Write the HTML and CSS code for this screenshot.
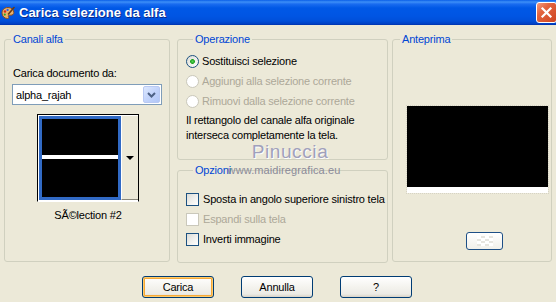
FILE: index.html
```html
<!DOCTYPE html>
<html lang="it">

<head>
    <meta charset="UTF-8">
    <title>Carica selezione da alfa</title>
    <link rel="stylesheet" href="styles.css">
</head>

<body>
    <div class="window">
        <div class="titlebar">
            <svg class="app-icon" width="14" height="14" viewBox="0 0 14 14">
                <path d="M7 1.5C3.5 1.5 1 3.8 1 7c0 3 2.4 5.5 5.5 5.5 1.4 0 1.6-.9 1-1.7-.5-.7-.2-1.6.8-1.6h1.5c1.9 0 3-1.1 3-2.8C12.8 3.6 10.3 1.5 7 1.5z" fill="#e9b36b" stroke="#8a4b1c" stroke-width="1"/>
                <circle cx="4" cy="5.5" r="1.2" fill="#d8261c"/>
                <circle cx="6.6" cy="3.9" r="1.1" fill="#2a5be0"/>
                <circle cx="3.8" cy="8.6" r="1.1" fill="#2aa32a"/>
                <path d="M13 1.5L7.5 8" stroke="#6b3b12" stroke-width="1.6" stroke-linecap="round"/>
            </svg>
            <span class="title">Carica selezione da alfa</span>
            <span class="close">
                <svg width="19" height="19" viewBox="0 0 19 19">
                    <path d="M5.5 5.5l8 8M13.5 5.5l-8 8" stroke="#fff" stroke-width="2.2" stroke-linecap="square"/>
                </svg>
            </span>
        </div>

        <div class="main">
            <fieldset class="group channels">
                <legend>Canali alfa</legend>
                <div class="label">Carica documento da:</div>
                <div class="combo">
                    <span class="combo-text">alpha_rajah</span>
                    <span class="combo-btn">
                        <svg width="9" height="6" viewBox="0 0 9 6">
                            <path d="M1 1l3.5 3.5L8 1" fill="none" stroke="#4d6185" stroke-width="2"/>
                        </svg>
                    </span>
                </div>
                <div class="thumb-col">
                    <div class="thumb">
                        <div class="thumb-img"><span class="thumb-line"></span></div>
                        <div class="thumb-btn"><span class="arrow"></span></div>
                    </div>
                    <div class="caption">SÃ©lection #2</div>
                </div>
            </fieldset>

            <div class="middle">
                <fieldset class="group operation">
                    <legend>Operazione</legend>
                    <div class="row first">
                        <span class="radio checked"></span>
                        <span>Sostituisci selezione</span>
                    </div>
                    <div class="row disabled">
                        <span class="radio"></span>
                        <span>Aggiungi alla selezione corrente</span>
                    </div>
                    <div class="row disabled">
                        <span class="radio"></span>
                        <span>Rimuovi dalla selezione corrente</span>
                    </div>
                    <p class="note">Il rettangolo del canale alfa originale<br>interseca completamente la tela.</p>
                </fieldset>

                <fieldset class="group options">
                    <legend>Opzioni</legend>
                    <div class="row first">
                        <span class="check"></span>
                        <span>Sposta in angolo superiore sinistro tela</span>
                    </div>
                    <div class="row disabled">
                        <span class="check"></span>
                        <span>Espandi sulla tela</span>
                    </div>
                    <div class="row">
                        <span class="check"></span>
                        <span>Inverti immagine</span>
                    </div>
                </fieldset>
            </div>

            <fieldset class="group preview">
                <legend>Anteprima</legend>
                <div class="preview-img"></div>
                <div class="zoom-btn"><span class="checker"></span></div>
            </fieldset>

            <!-- filigrana sopra i riquadri -->
            <div class="watermark">
                <span class="wm-name">Pinuccia</span>
                <span class="wm-site">www.maidiregrafica.eu</span>
            </div>
        </div>

        <div class="buttons">
            <button class="btn default">Carica</button>
            <button class="btn">Annulla</button>
            <button class="btn">?</button>
        </div>
    </div>
</body>

</html>
```

FILE: styles.css
```css
* {
    margin: 0;
    padding: 0;
    box-sizing: border-box;
}
body {
    background: #ece9d8;
    font: 11px "Liberation Sans", Arial, sans-serif;
    letter-spacing: -0.2px;
    color: #000;
}
.window {
    width: 556px;
    height: 302px;
    overflow: hidden;
}

/* barra del titolo */
.titlebar {
    height: 25px;
    display: flex;
    align-items: center;
    background: linear-gradient(#0a5ee8 0, #3d8ff7 2px, #1a6cf0 4px, #0058e6 8px, #0055e3 16px, #004fd9 21px, #003fc2 24px, #0030a8 25px);
}
.app-icon {
    margin-left: 1px;
    flex: none;
}
.title {
    margin-left: 4px;
    color: #fff;
    font: bold 13px "Liberation Sans", Arial, sans-serif;
    letter-spacing: 0;
    text-shadow: 1px 1px 0 #0a2a8a;
}
.close {
    margin-left: auto;
    margin-right: -1px;
    width: 21px;
    height: 21px;
    border: 1px solid #fff;
    border-radius: 3px;
    background: linear-gradient(135deg, #f39a7f 0, #e2643f 35%, #cf4521 100%);
    display: flex;
}

/* area principale */
.main {
    position: relative;
    display: flex;
    height: 238px;
    padding: 8px 0 0 4px;
}
.group {
    border: 1px solid #d0d0bf;
    border-radius: 3px;
    min-width: 0;
    height: 229px;
}
.group legend {
    margin-left: 7px;
    padding: 0 2px;
    line-height: 13px;
    color: #0046d5;
}

.channels {
    width: 166px;
    padding-left: 7px;
}
.channels legend {
    margin-left: -1px;
}
.label {
    margin: 21px 0 0 1px;
    line-height: 13px;
}
.combo {
    margin-top: 4px;
    width: 150px;
    height: 21px;
    border: 1px solid #7f9db9;
    background: #fff;
    display: flex;
    align-items: center;
    padding-left: 3px;
}
.combo-btn {
    margin-left: auto;
    margin-right: 1px;
    width: 17px;
    height: 17px;
    border: 1px solid #b9c9f3;
    border-radius: 2px;
    background: linear-gradient(135deg, #dde8fe 0, #c3d4fb 50%, #b1c6f7 100%);
    display: flex;
    align-items: center;
    justify-content: center;
}
.thumb-col {
    margin: 9px 0 0 25px;
    width: 102px;
    display: flex;
    flex-direction: column;
    align-items: center;
}
.thumb {
    width: 102px;
    height: 88px;
    display: flex;
    border: 1px solid #000;
    border-bottom-color: #fff;
    padding: 1px 0 1px 1px;
    background: #fff;
}
.thumb-img {
    width: 82px;
    height: 84px;
    border: 3px solid #316ac5;
    background: #000;
    padding-top: 36px;
}
.thumb-line {
    display: block;
    height: 4px;
    background: #fff;
}
.thumb-btn {
    flex: 1;
    margin-top: -1px;
    background: #ece9d8;
    border-left: 1px solid #fff;
    border-top: 1px solid #fff;
    border-bottom: 1px solid #8a887c;
    display: flex;
    align-items: center;
    justify-content: center;
}
.arrow {
    width: 0;
    height: 0;
    border-left: 4px solid transparent;
    border-right: 4px solid transparent;
    border-top: 4px solid #000;
}
.caption {
    margin-top: 7px;
    line-height: 13px;
}

/* colonna centrale */
.middle {
    margin-left: 7px;
    width: 211px;
}
.operation {
    height: 127px;
    padding-left: 8px;
}
.options {
    margin-top: 4px;
    height: 99px;
    padding-left: 8px;
}
.row {
    height: 20px;
    display: flex;
    align-items: center;
    gap: 3px;
    white-space: nowrap;
}
.operation .row.first {
    margin-top: 5px;
}
.options .row {
    gap: 4px;
}
.options .row.first {
    margin-top: 12px;
}
.row.disabled {
    color: #aca899;
}
.radio {
    width: 13px;
    height: 13px;
    border: 1px solid #1c5180;
    border-radius: 50%;
    background: linear-gradient(135deg, #dcdcd5 0, #f2f2ee 60%, #fff 100%);
    flex: none;
}
.radio.checked {
    background: radial-gradient(circle, #55d855 0, #21a121 2px, transparent 2.8px), linear-gradient(135deg, #dcdcd5 0, #f2f2ee 60%, #fff 100%);
}
.disabled .radio,
.disabled .check {
    border-color: #cac8bb;
    background: #fff;
}
.check {
    width: 13px;
    height: 13px;
    border: 1px solid #1c5180;
    background: linear-gradient(135deg, #dcdcd7 0, #f3f3f0 60%, #fff 100%);
    flex: none;
}
.note {
    margin-top: 2px;
    line-height: 15px;
    white-space: nowrap;
}

/* anteprima */
.preview {
    margin-left: 4px;
    width: 160px;
}
.preview-img {
    margin: 60px 0 0 14px;
    width: 141px;
    height: 87px;
    background: #000;
    border-bottom: 6px solid #fff;
    outline: 1px dotted #d6d3c4;
}
.zoom-btn {
    margin: 39px 0 0 73px;
    width: 37px;
    height: 18px;
    border: 1px solid #1d4f86;
    border-radius: 3px;
    background: linear-gradient(#fff, #f1f0ea);
    display: flex;
    align-items: center;
    justify-content: center;
}
.checker {
    width: 16px;
    height: 10px;
    background: repeating-conic-gradient(#e6e5df 0 25%, #fff 0 50%) 0 0 / 8px 5px;
}

/* filigrana */
.watermark {
    position: absolute;
    left: 226px;
    top: 115px;
    width: 116px;
    display: flex;
    flex-direction: column;
    align-items: center;
}
.wm-name {
    margin-left: 12px;
    font-size: 19px;
    line-height: 24px;
    letter-spacing: 0.6px;
    color: #a0a0bb;
    text-shadow: 1px 1px 0 #fff;
}
.wm-site {
    line-height: 12px;
    letter-spacing: 0.1px;
    color: #8a8a98;
}

/* pulsanti */
.buttons {
    display: flex;
    gap: 27px;
    padding: 13px 0 0 142px;
}
.btn {
    width: 72px;
    height: 22px;
    border: 1px solid #003c74;
    border-radius: 3px;
    background: linear-gradient(#fff 0, #f4f3ee 50%, #ecebe5 85%, #d8d2c6 100%);
    font: 11px "Liberation Sans", Arial, sans-serif;
    letter-spacing: -0.2px;
    color: #000;
}
.btn.default {
    box-shadow: inset 0 0 0 1px #ffcb6a, inset 0 0 0 2px #f5a93a;
}
```
